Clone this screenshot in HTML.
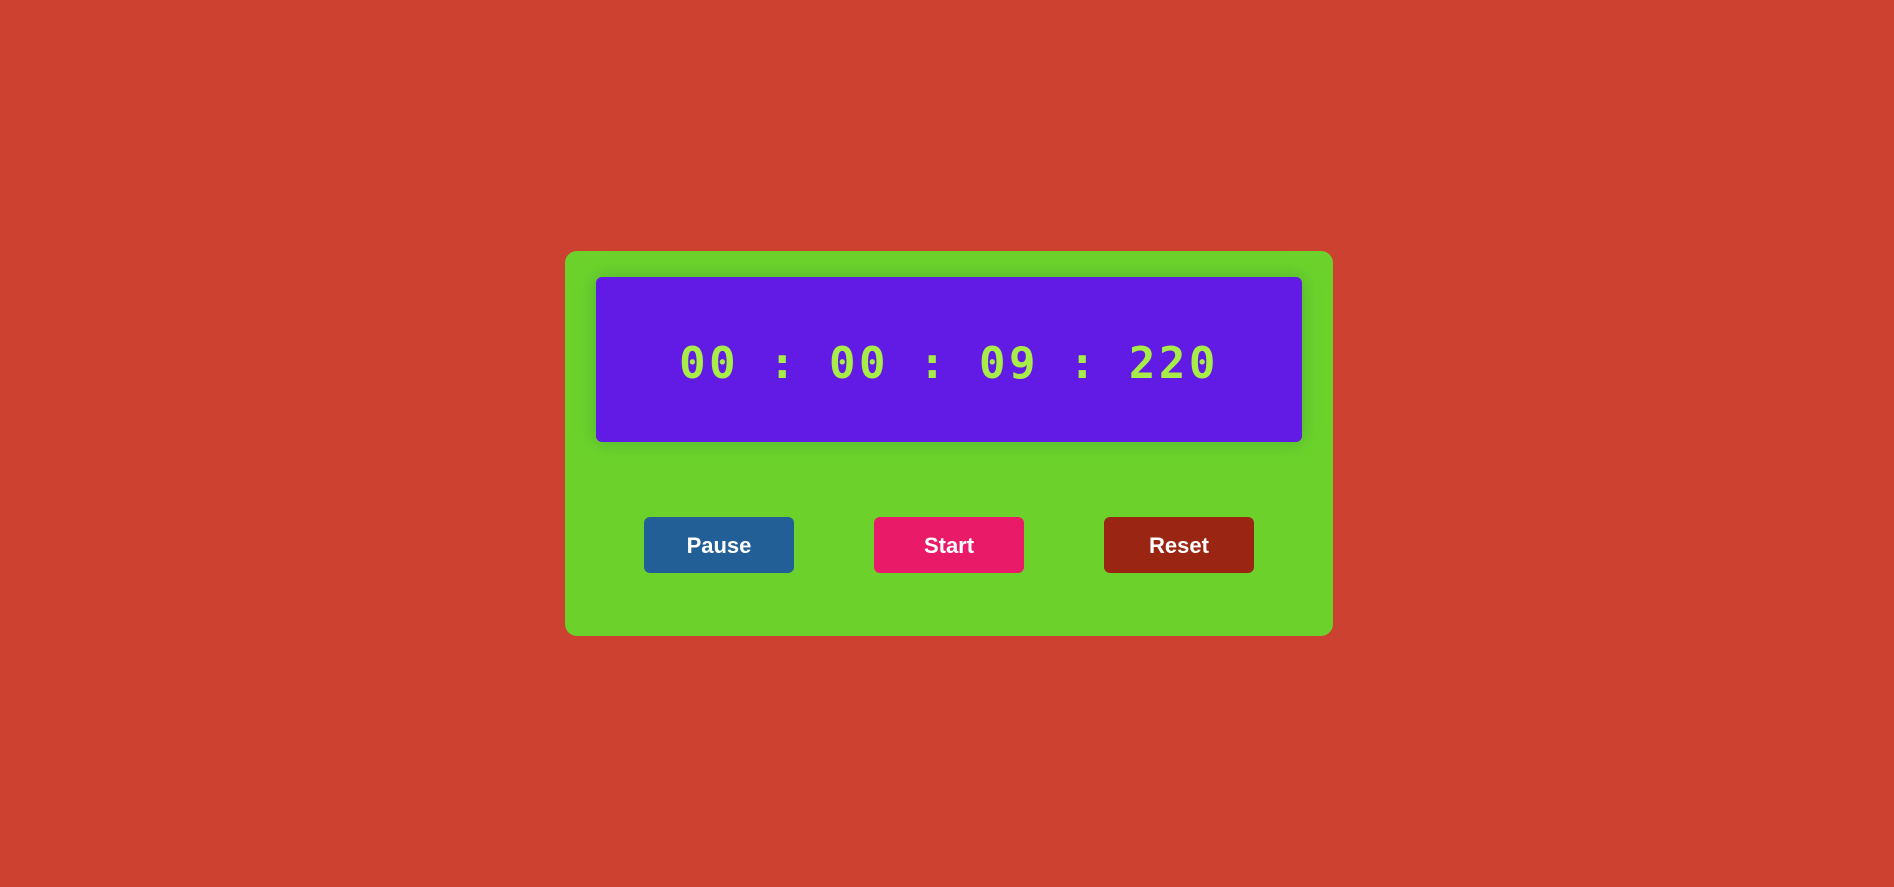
<!DOCTYPE html>
<html><head><meta charset="utf-8"><style>
html,body{margin:0;padding:0}
body{width:1894px;height:887px;background:#cd4130;position:relative;overflow:hidden;font-family:"Liberation Sans",sans-serif}
.card{position:absolute;left:565px;top:251px;width:768px;height:385px;background:#6cd22b;border-radius:12px}
.disp{position:absolute;left:31px;top:26px;width:706px;height:165px;background:#621ae5;border-radius:6px;box-shadow:0 0 18px rgba(60,160,60,.6);
color:#a8ec4a;font-family:"DejaVu Sans Mono",monospace;font-weight:bold;font-size:44px;line-height:173px;text-align:center;white-space:pre;letter-spacing:3.5px;overflow:hidden}
.btn{position:absolute;top:266px;width:150px;height:56px;box-sizing:border-box;padding-top:2px;border-radius:6px;color:#fff;font-weight:bold;font-size:22px;line-height:54px;text-align:center}
</style></head><body>
<div class="card">
<div class="disp">00 : 00 : 09 : 220</div>
<div class="btn" style="left:79px;background:#225f96">Pause</div>
<div class="btn" style="left:309px;background:#e91b69">Start</div>
<div class="btn" style="left:539px;background:#9b2513">Reset</div>
</div>
</body></html>
